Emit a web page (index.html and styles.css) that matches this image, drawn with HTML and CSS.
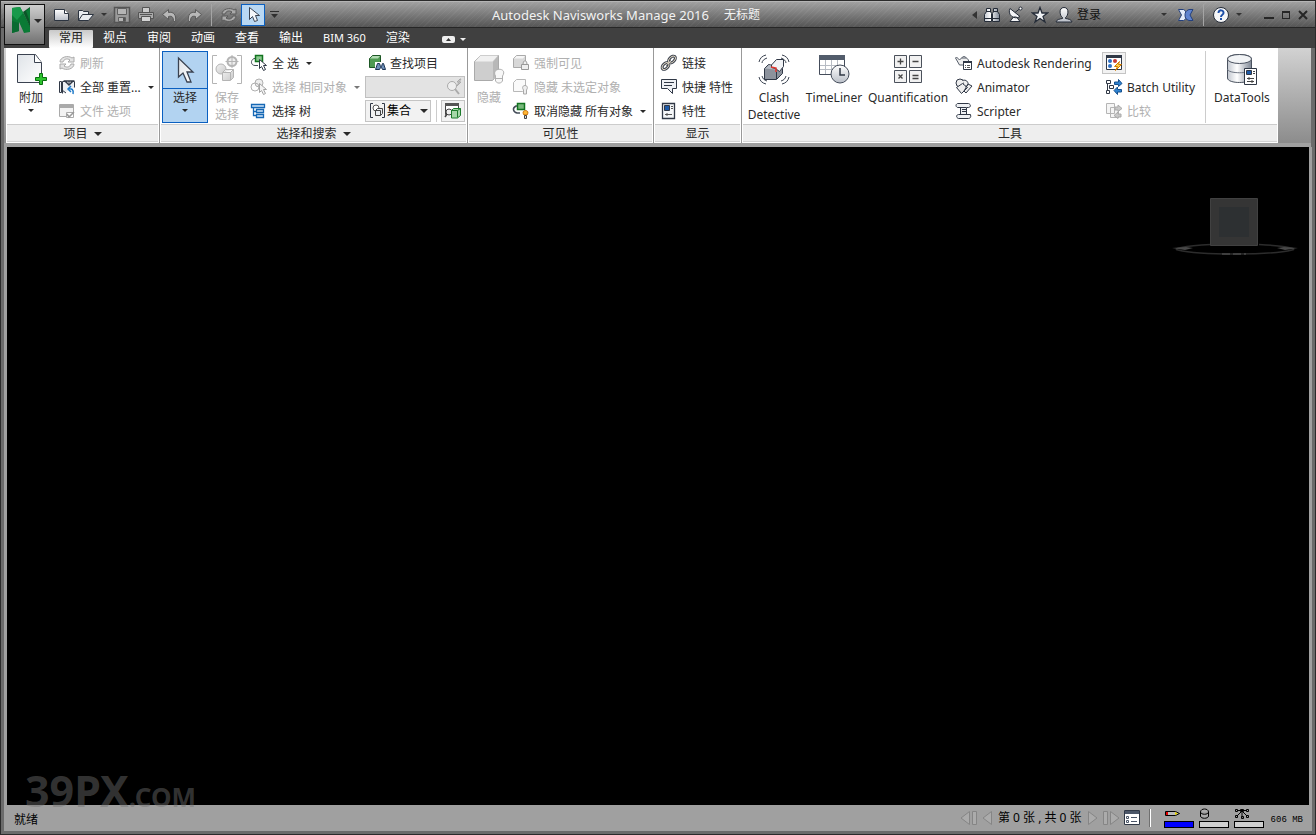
FILE: index.html
```html
<!DOCTYPE html>
<html lang="zh-CN">
<head>
<meta charset="utf-8">
<title>Autodesk Navisworks Manage 2016</title>
<link rel="stylesheet" href="styles.css">
</head>
<body>
<svg class="defs" aria-hidden="true">
  <defs>
    <linearGradient id="page" x1="0" y1="0" x2="1" y2="1"><stop offset="0" stop-color="#dfe3e8"/><stop offset="1" stop-color="#ffffff"/></linearGradient>
    <linearGradient id="metal" x1="0" y1="0" x2="0" y2="1"><stop offset="0" stop-color="#ffffff"/><stop offset="1" stop-color="#b9bec7"/></linearGradient>
    <linearGradient id="tube" x1="0" y1="0" x2="1" y2="0"><stop offset="0" stop-color="#c3c8d0"/><stop offset=".4" stop-color="#ffffff"/><stop offset="1" stop-color="#7d8694"/></linearGradient>
    <linearGradient id="pale" x1="0" y1="0" x2="1" y2="1"><stop offset="0" stop-color="#f2f2f2"/><stop offset="1" stop-color="#c9c9c9"/></linearGradient>
  </defs>
</svg>
<div class="window">
  <header class="title-bar">
    <button class="app-button" aria-label="应用程序菜单">
      <svg width="20" height="27" viewBox="0 0 20 27"><path fill="#0a7a35" d="M0 1l8-1 4 7 6 12v6l-6 1-5-11v9l-7 2z"/><path fill="#0b5528" d="M11 5l7-5v20z"/><path fill="#17994a" d="M0 1l8-1 3 6-6 7-5-5z"/><path fill="#096a30" d="M0 14l7 2v8l-7 2z"/><path fill="#0a7a35" d="M14 4l4-3v14z"/></svg>
      <span class="caret caret-wide"></span>
    </button>
    <div class="quick-access">
      <button class="tool" aria-label="新建"><svg width="18" height="18" viewBox="0 0 18 18"><path fill="url(#metal)" stroke="#2c3440" d="M1.500 3.500h10l4 4v7h-14z"/><path fill="#fff" stroke="#2c3440" d="M11.500 3.500v4h4"/></svg></button>
      <button class="tool" aria-label="打开"><svg width="18" height="18" viewBox="0 0 18 18"><path fill="#e9ecf0" stroke="#2c3440" d="M1.500 14.500v-10h4l1 1h5v3M1.500 14.500l4-6h11l-5 6z"/></svg></button>
      <span class="caret caret-small"></span>
      <button class="tool" aria-label="保存"><svg width="18" height="18" viewBox="0 0 18 18"><path fill="#9a9a9a" stroke="#555" stroke-width="1.500" d="M1.500 1.500h15v15h-15z"/><path fill="#b5b5b5" stroke="#606060" d="M4.500 2.500h9v6h-9zM5.500 11.500h7v4h-7z"/><path fill="#555" d="M10 12h2v3h-2z"/></svg></button>
      <button class="tool" aria-label="打印"><svg width="18" height="18" viewBox="0 0 18 18"><path fill="#ccc" stroke="#555" d="M5.500 6.500v-5h7v5"/><path fill="#aaa" stroke="#555" d="M1.500 6.500h15v6h-15z"/><path fill="#d4d4d4" stroke="#555" d="M4.500 10.500h9v5h-9z"/><path stroke="#555" d="M3 8.500h12"/></svg></button>
      <button class="tool" aria-label="撤消"><svg width="18" height="18" viewBox="0 0 18 18"><path fill="#b8b8b8" stroke="#5a5a5a" d="M1.500 8.500l6-5v3c5-1 8 2 7 9h-2c0-4-1-6-5-5v3z"/></svg></button>
      <button class="tool" aria-label="恢复"><svg width="18" height="18" viewBox="0 0 18 18"><path fill="#b8b8b8" stroke="#5a5a5a" d="M16.500 8.500l-6-5v3c-5-1-8 2-7 9h2c0-4 1-6 5-5v3z"/></svg></button>
      <span class="bar-divider"></span>
      <button class="tool" aria-label="刷新"><svg width="18" height="18" viewBox="0 0 18 18"><path fill="#aaa" stroke="#5a5a5a" d="M2 8c0-5 8-7 12-4l2-1v5h-6l2-2c-3-2-6-1-7 2zM16 10c0 5-8 7-12 4l-2 1v-5h6l-2 2c3 2 6 1 7-2z"/></svg></button>
      <button class="tool tool-active" aria-label="选择"><svg width="18" height="18" viewBox="0 0 18 18"><path fill="#f5f7fa" stroke="#3a4352" d="M5.500 1.500v12l3-3 2 5 3-1-2-5h4z"/></svg></button>
      <button class="tool tool-narrow" aria-label="自定义"><svg width="9" height="8" viewBox="0 0 9 8"><path fill="#2f2f2f" d="M0 0h9v1H0zM1 3h7L4.500 7z"/></svg></button>
    </div>
    <h1 class="title"><span>Autodesk Navisworks Manage 2016</span><span class="document">无标题</span></h1>
    <div class="info-center">
      <svg width="5" height="8" viewBox="0 0 5 8"><path fill="#333" d="M5 0v8L0 4z"/></svg>
      <button class="tool" aria-label="搜索"><svg width="18" height="18" viewBox="0 0 18 18"><path fill="url(#tube)" stroke="#252c38" d="M3.500 2.500h4v3l1 2v8h-7v-7l2-3zM10.500 2.500h4v3l2 3v7h-7v-8l1-2z"/><path stroke="#252c38" d="M3 5.500h5M10 5.500h5M1 12.500h7M10 12.500h7"/></svg></button>
      <button class="tool" aria-label="通讯中心"><svg width="18" height="18" viewBox="0 0 18 18"><path fill="#f4f5f7" stroke="#252c38" d="M6.500 11l-3.500 4.500h10L9.500 11zM3 2.500c-3 6 4 12 10 8zM8 6.500l5-4"/><circle cx="13.500" cy="2.500" r="1.500" fill="#fff" stroke="#252c38"/></svg></button>
      <button class="tool" aria-label="收藏夹"><svg width="18" height="18" viewBox="0 0 18 18"><path fill="#f0f2f5" stroke="#252c38" stroke-width="1.300" d="M9 1.500l2 5.500h5.500L12 10.500l2 5.500-5-3.500L4 16l2-5.500L1.500 7H7z"/></svg></button>
      <button class="login"><svg width="18" height="18" viewBox="0 0 18 18"><path fill="url(#metal)" stroke="#252c38" d="M9 1.500c-6 0-4 9-1.500 10v1c-3 .5-6 1-6.500 3.500h16c-.5-2.500-3.500-3-6.500-3.500v-1c2.500-1 4.500-10-1.500-10z"/></svg><span>登录</span><i class="caret caret-small"></i></button>
      <button class="tool" aria-label="Exchange"><svg width="18" height="18" viewBox="0 0 18 18"><path fill="#e3ebfa" stroke="#24407c" d="M1.500 3.500h5c2 1 3 3 3 5.500 0 3-1 4.500-3 5.500h-5l3-5.500z"/><path fill="#5f83cf" stroke="#24407c" d="M16 3.500h-4c-3 1-4 3-4 5.500 0 3 1 4.500 4 5.500h4L13 9z"/></svg></button>
      <span class="bar-divider"></span>
      <button class="tool help" aria-label="帮助"><svg width="18" height="18" viewBox="0 0 18 18"><circle cx="9" cy="9" r="7.500" fill="#f5f6f8" stroke="#252c38"/><path fill="none" stroke="#1d4fa8" stroke-width="2" d="M6.500 7c0-4 5.500-3 5 0 0 2-2.500 1.500-2.500 4M9 12v2"/></svg></button>
      <span class="caret caret-small"></span>
      <div class="window-controls">
        <button aria-label="最小化"><svg width="10" height="10" viewBox="0 0 10 10"><path fill="#262626" d="M0 7h10v2H0z"/></svg></button>
        <button aria-label="最大化"><svg width="10" height="10" viewBox="0 0 10 10"><path fill="#262626" fill-rule="evenodd" d="M1 1h8v8H1zM2 3v5h6V3z"/></svg></button>
        <button aria-label="关闭"><svg width="10" height="10" viewBox="0 0 10 10"><path stroke="#262626" stroke-width="2" d="M1 1l8 8M9 1L1 9"/></svg></button>
      </div>
    </div>
  </header>

  <nav class="tabs">
    <button class="tab tab-current">常用</button>
    <button class="tab">视点</button>
    <button class="tab">审阅</button>
    <button class="tab">动画</button>
    <button class="tab">查看</button>
    <button class="tab">输出</button>
    <button class="tab tab-latin">BIM 360</button>
    <button class="tab">渲染</button>
    <button class="ribbon-toggle" aria-label="最小化功能区"><svg width="13" height="7" viewBox="0 0 13 7"><rect width="13" height="7" rx="2" fill="#eee"/><path fill="#333" d="M4 5h5L6.500 2z"/></svg><i class="caret caret-light"></i></button>
  </nav>

  <div class="ribbon">
    <section class="panel panel-project">
      <div class="panel-body">
        <button class="large"><svg width="32" height="32" viewBox="0 0 32 32"><path fill="url(#page)" stroke="#3a4250" d="M2.500.500h18l6 8v20h-24z"/><path fill="#fff" stroke="#3a4250" d="M19.500.500v8h7"/><path fill="#2fc32f" stroke="#08700f" d="M24.500 19.500h3v4h4v3h-4v4h-3v-4h-4v-3h4z"/></svg><span>附加</span><i class="caret caret-small"></i></button>
        <div class="stack">
          <button class="small" disabled><svg width="18" height="18" viewBox="0 0 18 18"><path fill="#e4e4e4" stroke="#aaa" d="M2 8c0-5 8-7 12-4l2-1v5h-6l2-2c-3-2-6-1-7 2zM16 10c0 5-8 7-12 4l-2 1v-5h6l-2 2c3 2 6 1 7-2z"/></svg><span>刷新</span></button>
          <button class="small"><svg width="18" height="18" viewBox="0 0 18 18"><path fill="#eceff3" stroke="#303846" d="M1.500 3.500h2v11h-2zM4.500 15.500v-12h12v6"/><path fill="#fff" stroke="#303846" stroke-width="1.500" d="M7 3h8l-4 4z"/><path stroke="#303846" d="M11 3v4M4 12l4 3"/><path fill="none" stroke="#1b78c8" stroke-width="1.500" d="M13 8l-3 3 3 3M10 11c4-1 6 1 5 5"/></svg><span>全部 重置...</span><i class="caret caret-small"></i></button>
          <button class="small" disabled><svg width="18" height="18" viewBox="0 0 18 18"><path fill="#f3f3f3" stroke="#aaa" d="M1.500 2.500h14v12h-14z"/><path fill="#aaa" d="M2 3h13v3H2z"/><path fill="#fff" stroke="#aaa" d="M8.500 10.500h7v5h-7z"/><path fill="none" stroke="#999" stroke-width="1.500" d="M9 12l2 3 5-5"/></svg><span>文件 选项</span></button>
        </div>
      </div>
      <button class="panel-label">项目<i class="caret caret-wide"></i></button>
    </section>

    <section class="panel panel-select">
      <div class="panel-body">
        <button class="large large-active"><span class="active-icon"><svg width="32" height="32" viewBox="0 0 32 32"><path fill="url(#page)" stroke="#3a4250" stroke-width="1.300" d="M9.500 4v19l4.500-4 4 9h4l-4-10h6z"/></svg></span><span>选择</span><i class="caret caret-small"></i></button>
        <button class="large" disabled><svg width="32" height="32" viewBox="0 0 32 32"><path fill="none" stroke="#b4b4b4" d="M6 1.500H1.500v28H6M26 1.500h4.500v28H26"/><circle cx="10" cy="15" r="5" fill="url(#pale)" stroke="#b4b4b4"/><path fill="url(#pale)" stroke="#b4b4b4" d="M11.500 18.500l3-3h8v8l-3 3h-8zM11.500 18.500h8l3-3M19.500 18v8"/><circle cx="21" cy="7.500" r="4.500" fill="#eee" stroke="#b4b4b4" stroke-width="2"/><path stroke="#b4b4b4" d="M21 1v13M14.500 7.500h13"/></svg><span>保存<br>选择</span></button>
        <div class="stack">
          <button class="small"><svg width="18" height="18" viewBox="0 0 18 18"><path fill="none" stroke="#444c58" d="M7 4.500H4c-4 2-3 7 1 7h3"/><path fill="#8bc98f" stroke="#11731f" stroke-width="1.500" d="M5.500 1.500h7v6h-7z"/><path fill="#fff" stroke="#303846" d="M9.500 5.500v9l2-2 2 4 2-1-2-4h3z"/></svg><span>全 选</span><i class="caret caret-small"></i></button>
          <button class="small" disabled><svg width="18" height="18" viewBox="0 0 18 18"><circle cx="9" cy="5" r="4" fill="#eee" stroke="#b0b0b0"/><circle cx="5" cy="9" r="4" fill="none" stroke="#b0b0b0"/><path fill="#f4f4f4" stroke="#a4a4a4" d="M9.500 5.500v9l2-2 2 4 2-1-2-4h3z"/></svg><span>选择 相同对象</span><i class="caret caret-small"></i></button>
          <button class="small"><svg width="18" height="18" viewBox="0 0 18 18"><path fill="#d5e7fa" stroke="#1668b5" stroke-width="1.300" d="M1.500 2.500h13v3h-13zM6.500 7.500h7v3h-7zM6.500 12.500h7v3h-7z"/><path fill="none" stroke="#1668b5" stroke-width="1.300" d="M3.500 5.500v8h3M3.500 9.500h3"/></svg><span>选择 树</span></button>
        </div>
        <div class="search-stack">
          <button class="small find"><svg width="18" height="18" viewBox="0 0 18 18"><path fill="#4f9a52" stroke="#1d5725" d="M1.500 4.500l3-3h8v9l-3 3h-8z"/><path fill="#b1dab2" d="M2 4.500L4.500 2H12l-2 2.500z"/><path fill="#fff" d="M7 8h11v9H7z"/><path fill="#6f8fb8" stroke="#1d3555" d="M9.500 9.500h2l1 3h1l1-3h1l2 6h-3l-1-2h-1l-1 2h-4z"/></svg><span>查找项目</span></button>
          <div class="quick-find"><input type="text" aria-label="快速查找" disabled><svg width="18" height="18" viewBox="0 0 18 18"><path stroke="#aaa" stroke-width="2" d="M10 11l4 5"/><circle cx="7" cy="8" r="4.500" fill="#eee" stroke="#aaa"/><path fill="#ddd" stroke="#aaa" d="M15 1l-3 3h2l-2 4 4-4h-2l2-3z"/></svg></div>
          <div class="sets-row">
            <label class="sets"><svg width="18" height="18" viewBox="0 0 18 18"><path fill="none" stroke="#303846" d="M4 1.500H1.500v14H4M13 1.500h2.500v14H13"/><circle cx="7" cy="6" r="3" fill="#fff" stroke="#555"/><path fill="#eceff3" stroke="#444" d="M6.500 8.500l2-2h5v5l-2 2h-5zM6.500 8.500h5v5"/></svg><select aria-label="集合"><option>集合</option></select><i class="caret caret-wide"></i></label>
            <span class="sets-divider"></span>
            <button class="boxed" aria-label="选择检验器"><svg width="18" height="18" viewBox="0 0 18 18"><path fill="#fff" stroke="#444" d="M1.500 1.500h13v11h-13z"/><path fill="#555" d="M1 1h14v3H1z"/><circle cx="5" cy="10" r="3" fill="#eee" stroke="#444"/><path stroke="#444" stroke-width="1.500" d="M3 12l-2 3"/><path fill="#a6d7a8" stroke="#1c7a2b" d="M7.500 8.500l2-2h7v7l-3 2.500h-6zM7.500 8.500h6v7M13.500 8.500l3-2"/></svg></button>
          </div>
        </div>
      </div>
      <button class="panel-label">选择和搜索<i class="caret caret-wide"></i></button>
    </section>

    <section class="panel panel-visibility">
      <div class="panel-body">
        <button class="large" disabled><svg width="32" height="32" viewBox="0 0 32 32"><path fill="#cecece" stroke="#aaa" d="M1.500 7.500l6-6h18v18l-6 7h-18z"/><path fill="#f0f0f0" d="M2 7.500l5.500-6h17.500l-5.500 6z"/><path fill="#b8b8b8" d="M20 8l5-6v17l-5 6z"/><path fill="#f7f7f7" stroke="#b0b0b0" d="M22.500 22c-5-9 13-9 7 0v5l-2 2h-3l-2-2zM23 24.500h6"/></svg><span>隐藏</span></button>
        <div class="stack">
          <button class="small" disabled><svg width="18" height="18" viewBox="0 0 18 18"><path fill="#d8d8d8" stroke="#aaa" d="M1.500 4.500l3-3h9v9l-3 3h-9z"/><path fill="#f5f5f5" d="M2 4.500L4.500 2H13l-2 2.500z"/><path fill="#eee" stroke="#999" d="M9.500 10.500h7v5h-7zM11 10.500c0-5 4-5 4 0"/></svg><span>强制可见</span></button>
          <button class="small" disabled><svg width="18" height="18" viewBox="0 0 18 18"><path fill="#fafafa" stroke="#b8b8b8" d="M1.500 4.500l3-3h9v9l-3 3h-9z"/><path fill="#eee" stroke="#aaa" d="M11.500 12c-4-6 7-6 3 0v4h-3z"/></svg><span>隐藏 未选定对象</span></button>
          <button class="small"><svg width="18" height="18" viewBox="0 0 18 18"><path fill="none" stroke="#444c58" stroke-width="1.500" d="M6 4H4C0 6 1 10 5 11h3"/><path fill="#79b87c" stroke="#11731f" stroke-width="1.500" d="M5.500 1.500h7v6h-7z"/><path fill="#ffb733" stroke="#c66c00" d="M12 13c-4-6 7-6 3 0z"/><path fill="#d8dce2" stroke="#444" d="M12.500 13.500h2v3h-2z"/></svg><span>取消隐藏 所有对象</span><i class="caret caret-small"></i></button>
        </div>
      </div>
      <div class="panel-label">可见性</div>
    </section>

    <section class="panel panel-display">
      <div class="panel-body">
        <div class="stack">
          <button class="small"><svg width="18" height="18" viewBox="0 0 18 18"><g fill="none" stroke="#353d4a" stroke-width="3"><ellipse cx="12" cy="5.500" rx="4" ry="2.500" transform="rotate(-45 12 5.500)"/><ellipse cx="5.500" cy="12" rx="4" ry="2.500" transform="rotate(-45 5.500 12)"/><path d="M6 11l5-4"/></g><g fill="none" stroke="#e0d6c4"><ellipse cx="12" cy="5.500" rx="4" ry="2.500" transform="rotate(-45 12 5.500)"/><ellipse cx="5.500" cy="12" rx="4" ry="2.500" transform="rotate(-45 5.500 12)"/><path d="M6 11l5-4"/></g></svg><span>链接</span></button>
          <button class="small"><svg width="18" height="18" viewBox="0 0 18 18"><path fill="#eef0f4" stroke="#303846" d="M1.500 1.500h15v9h-4v5l-5-5h-6z"/><path stroke="#303846" d="M4 4.500h10M4 7.500h8"/></svg><span>快捷 特性</span></button>
          <button class="small"><svg width="18" height="18" viewBox="0 0 18 18"><path fill="#f5f7f9" stroke="#303846" stroke-width="1.300" d="M2.500 1.500h12v15h-12z"/><path fill="#1d5aa8" stroke="#303846" d="M4.500 3.500h5v5h-5z"/><path stroke="#555" d="M11 4.500h2M11 6.500h2M5 12.500h7M7 11v3"/></svg><span>特性</span></button>
        </div>
      </div>
      <div class="panel-label">显示</div>
    </section>

    <section class="panel panel-tools">
      <div class="panel-body">
        <button class="large"><svg width="32" height="32" viewBox="0 0 32 32"><path fill="none" stroke="#3a4250" d="M1 8C2 4 4 2 8 1M4 9c0-2 2-4 5-5M31 8c-1-4-3-6-7-7M28 9c0-2-2-4-5-5M1 23c1 4 3 6 7 7M4 22c1 3 2 4 5 5M31 23c-1 4-3 6-7 7M28 22c-1 3-2 4-5 5"/><path fill="#8c929c" stroke="#303846" d="M6.500 14.500l4-4 9 2 5 2v5l-6 6h-12z"/><path fill="#b5bac3" d="M7 14.500l4-3.500 8 1.500-2 3z"/><path fill="#f1f3f6" stroke="#303846" d="M13.500 11l5-5.500h7v7l-4 5-4-3-4-1z"/><path fill="none" stroke="#e3342c" stroke-width="1.500" d="M13 13l5 1v4"/><path stroke="#303846" d="M18.500 18v7"/></svg><span>Clash<br>Detective</span></button>
        <button class="large"><svg width="32" height="32" viewBox="0 0 32 32"><path fill="#fff" stroke="#444c5a" d="M1.500 1.500h25v19h-25z"/><path fill="#525c6b" d="M1 1h26v5H1z"/><path stroke="#b6bbc3" d="M2 11.500h24M2 15.500h24M7.500 6v14M13.500 6v14M19.500 6v14"/><circle cx="22" cy="20" r="9" fill="url(#metal)" stroke="#444c5a"/><path fill="none" stroke="#303846" stroke-width="1.500" d="M22 14v7h5"/></svg><span>TimeLiner</span></button>
        <button class="large"><svg width="32" height="32" viewBox="0 0 32 32"><path fill="#f1f1f1" stroke="#4b515b" d="M2.500 1.500h12v12h-12zM17.500 1.500h12v12h-12zM2.500 16.500h12v12h-12zM17.500 16.500h12v12h-12z"/><path stroke="#444" stroke-width="1.300" fill="none" d="M5.500 7.500h6M8.500 4.500v6M20.500 7.500h6M6.500 20.500l4 4M10.500 20.500l-4 4M20.500 21.500h6M20.500 24.500h6"/></svg><span>Quantification</span></button>
        <div class="stack">
          <button class="small"><svg width="18" height="18" viewBox="0 0 18 18"><path fill="#eee" stroke="#555d69" d="M4.500 6l-3-3-1 1 4 7h9v-5l-2-2h-5zM7 4c0-2 4-2 4 0"/><path fill="#fff" stroke="#303846" d="M8.500 7.500h8v8h-8z"/><path fill="#303846" d="M8 7h9v2H8z"/><path stroke="#555" d="M10 11.500h1M12 11.500h3M10 13.500h1M12 13.500h3"/></svg><span>Autodesk Rendering</span></button>
          <button class="small"><svg width="18" height="18" viewBox="0 0 18 18"><circle cx="5" cy="5" r="4" fill="#eee" stroke="#303846"/><path fill="#eee" stroke="#303846" d="M7.500 2.500c5-2 8 5 3 6M9 13l4-7 4 2-6 7zM1.500 9.500l5 6 6-6-5-4z"/></svg><span>Animator</span></button>
          <button class="small"><svg width="18" height="18" viewBox="0 0 18 18"><path fill="#eef0f3" stroke="#303846" d="M2.500 1.500h11c3 1 2 4 0 4h-2v7h4c1 3-1 4-2 4h-10c-3-1-2-4 0-4h2v-7h-3c-2-1-2-3 0-4zM5 5.500h6M5 12.500h8M7 7.500h4M7 9.500h4"/></svg><span>Scripter</span></button>
        </div>
        <div class="stack stack-right">
          <button class="boxed" aria-label="外观配置器"><svg width="18" height="18" viewBox="0 0 18 18"><path fill="#fff" stroke="#303846" d="M1.500 1.500h15v14h-15z"/><path fill="#303846" d="M1 1h16v3H1z"/><circle cx="5" cy="7" r="2" fill="#2d70c4"/><circle cx="10" cy="7" r="2" fill="#c73a34"/><circle cx="5" cy="12" r="2" fill="#2d70c4"/><path fill="#ffd34a" stroke="#d17b00" d="M14.500 7.500l-5 5h3l-2 4 6-6h-3z"/></svg></button>
          <button class="small"><svg width="18" height="18" viewBox="0 0 18 18"><path fill="#fff" stroke="#303846" d="M1.500 2.500h4v3h-4zM4.500 7.500h4v3h-4zM1.500 12.500h3v3h-3z"/><path fill="none" stroke="#303846" d="M2.500 5.500v7"/><path fill="#2e82d1" stroke="#15508e" d="M9.500 4h4V1.500l3.500 4-3.500 3V6.500h-4zM16.500 11.500h-4V9L9 12.500l3.500 4V14h4z"/></svg><span>Batch Utility</span></button>
          <button class="small" disabled><svg width="18" height="18" viewBox="0 0 18 18"><path fill="#f5f5f5" stroke="#b5b5b5" d="M1.500 1.500h8v10h-8zM5.500 5.500h8v10h-8z"/><path fill="#c8c8c8" stroke="#aaa" d="M10 5h3V3l4 3.500-4 3V8h-3zM16 12h-3v-2l-4 3.500 4 3V15h3z"/></svg><span>比较</span></button>
        </div>
        <button class="large datatools"><svg width="32" height="32" viewBox="0 0 32 32"><path fill="url(#tube)" stroke="#4a525f" d="M1.500 5c0-6 24-6 24 0v19c0 6-24 6-24 0z"/><ellipse cx="13.500" cy="5" rx="12" ry="4.500" fill="#f2f4f6" stroke="#4a525f"/><path fill="none" stroke="#6d7582" d="M1.500 15c0 5 24 5 24 0"/><path fill="#fff" stroke="#303846" d="M18.500 14.500h12v16h-12z"/><path fill="#1d5aa8" stroke="#303846" d="M20.500 16.500h5v4h-5z"/><path stroke="#444" d="M27 17.500h2M27 19.500h2M21 24.500h7M21 27.500h7M23 23v3M26 26v3"/></svg><span>DataTools</span></button>
      </div>
      <div class="panel-label">工具</div>
    </section>
  </div>

  <main class="viewport">
    <svg class="view-cube" width="126" height="58" viewBox="0 0 126 58"><path fill="none" stroke="#2c2c2c" stroke-width="1.500" d="M39 46.500C10 48 0 51 6 52c12 3 35 4 57 4s45-1 57-4c6-1-4-4-33-5.500"/><path fill="#484848" d="M0 50l14-1 7 1-8 2zM126 50l-14-1-7 1 8 2z"/><path stroke="#5d5d5d" stroke-dasharray="8 3" d="M50 56h24"/><path fill="#353535" stroke="#414141" d="M38.500.500h47v47h-47z"/><path fill="#2d3032" d="M47 9h30v30H47z"/></svg>
  </main>

  <footer class="status-bar">
    <span class="status-text">就绪</span>
    <div class="sheets">
      <button aria-label="第一张"><svg width="18" height="16" viewBox="0 0 18 16"><path fill="#ababab" stroke="#858585" d="M9.500 1.500v13L1 8zM12.500 1.500h4v13h-4z"/></svg></button>
      <button aria-label="上一张"><svg width="10" height="16" viewBox="0 0 10 16"><path fill="#ababab" stroke="#858585" d="M9.500 1.500v13L1 8z"/></svg></button>
      <span class="sheet-count">第 0 张 , 共 0 张</span>
      <button aria-label="下一张"><svg width="10" height="16" viewBox="0 0 10 16"><path fill="#ababab" stroke="#858585" d="M.500 1.500v13L9 8z"/></svg></button>
      <button aria-label="最后一张"><svg width="18" height="16" viewBox="0 0 18 16"><path fill="#ababab" stroke="#858585" d="M1.500 1.500h4v13h-4zM8.500 1.500v13L17 8z"/></svg></button>
      <button aria-label="图纸浏览器"><svg width="16" height="16" viewBox="0 0 16 16"><path fill="#fff" stroke="#303846" d="M.500.500h15v14H.500z"/><path fill="#4b5668" d="M1 1h14v3H1z"/><path fill="none" stroke="#4b5668" d="M2.500 6.500h2v2h-2zM2.500 10.500h2v2h-2zM7 7.500h6M7 11.500h6"/></svg></button>
    </div>
    <span class="status-divider"></span>
    <div class="meter"><svg width="30" height="13" viewBox="0 0 30 13"><path fill="#bbb" stroke="#000" d="M1.500 3.500h10l4 2-4 2h-10z"/><path fill="#e00000" d="M2 4h2v3H2z"/><path fill="#e8d500" d="M11 4l3 1.500-3 1.500z"/></svg><span class="gauge gauge-full"></span></div>
    <div class="meter"><svg width="30" height="13" viewBox="0 0 30 13"><path fill="#aaa" stroke="#000" d="M1.500 4c0-4 8-4 8 0v4c0 3-8 3-8 0zM1.500 4c0 3 8 3 8 0"/></svg><span class="gauge"></span></div>
    <div class="meter"><svg width="30" height="13" viewBox="0 0 30 13"><path fill="none" stroke="#000" d="M1.500 1.500h2v2h-2zM6.500 1.500h3v2h-3zM12.500 1.500h2v2h-2zM3.500 2.500h9M8 3.500v6M7 4L3 8M9 4l4 4M1.500 7.500h2v2h-2zM12.500 7.500h2v2h-2zM7.500 8.500h2v2h-2z"/></svg><span class="gauge"></span></div>
    <span class="memory">606 MB</span>
  </footer>
  <div class="watermark">39PX<span>.COM</span></div>
</div>
</body>
</html>
```

FILE: styles.css
```css
* { box-sizing: border-box; }
body {
  margin: 0;
  background: #2b2b2b;
  color: #2a2a2a;
  font: 12px/16px "Noto Sans", "Noto Sans CJK SC", sans-serif;
}
button, select, input { font: inherit; color: inherit; }
button { margin: 0; padding: 0; border: 0; background: none; }
svg { display: block; flex: none; }
.defs { position: absolute; width: 0; height: 0; }

.window {
  position: relative;
  display: flex;
  flex-direction: column;
  min-height: 100vh;
  border: 1px solid #2b2b2b;
  background: #6b6b6b;
}

.caret {
  flex: none;
  width: 0;
  height: 0;
  border: 3px solid transparent;
  border-top-color: currentColor;
  border-bottom: 0;
}
.caret-small { border-width: 3px 3px 0; }
.caret-wide { border-width: 4px 4px 0; }
.caret-light { border-width: 3px 3px 0; color: #eee; }

/* Title bar */
.title-bar {
  display: flex;
  align-items: center;
  height: 27px;
  padding: 0 7px 0 52px;
  border-top: 1px solid #b5b5b5;
  border-bottom: 1px solid #262626;
  background:
    repeating-linear-gradient(135deg, rgba(255, 255, 255, .04) 0 1px, transparent 1px 4px),
    linear-gradient(#a0a0a0, #555);
}
.app-button {
  position: absolute;
  left: 3px;
  top: 3px;
  z-index: 1;
  display: flex;
  align-items: center;
  gap: 2px;
  width: 41px;
  height: 41px;
  padding: 0 0 8px 7px;
  border: 1px solid #111;
  background: linear-gradient(#cfcfcf, #727272);
}
.quick-access, .info-center, .window-controls { display: flex; align-items: center; }
.quick-access { gap: 6px; }
.quick-access .caret { margin: 0; color: #333; }
.tool { display: flex; align-items: center; justify-content: center; width: 18px; height: 22px; }
.tool-active { width: 24px; margin: 0 -3px; border: 1px solid #0a5fc0; background: #b9d8f3; }
.tool-narrow { width: 12px; }
.bar-divider { width: 1px; height: 22px; margin: 0 2px; background: #a4a4a4; }
.title {
  flex: 1;
  display: flex;
  justify-content: center;
  gap: 15px;
  margin: 0;
  color: #f2f2f2;
  font-size: 13px;
  font-weight: 400;
  white-space: nowrap;
}
.document { font-size: 12px; }
.info-center { gap: 6px; }
.info-center > .caret { margin-right: 16px; color: #333; }
.login { display: flex; align-items: center; gap: 4px; width: 112px; margin-right: 4px; color: #111; }
.login .caret { margin-left: auto; color: #333; }
.window-controls { gap: 7px; }

/* Ribbon tabs */
.tabs {
  display: flex;
  height: 20px;
  margin: 0 0 0 3px;
  padding: 2px 0 0 45px;
  background: #404040;
  color: #fff;
}
.tab { padding: 0 10px 2px; white-space: nowrap; }
.tab-latin { font-size: 11px; }
.tab-current { border-radius: 1px; background: linear-gradient(#c9c9c9, #fff); color: #222; }
.ribbon-toggle { display: flex; align-items: center; gap: 5px; margin-left: 22px; }

/* Ribbon */
.ribbon {
  display: flex;
  margin: 0 4px 0 3px;
  padding-left: 2px;
  border-bottom: 4px solid #a0a0a0;
  background: linear-gradient(#d2d2d2, #8c8c8c);
}
.panel { display: flex; flex-direction: column; padding-bottom: 1px; border-right: 1px solid #999; background: #fff; }
.panel-project { width: 154px; }
.panel-select { width: 308px; }
.panel-visibility { width: 186px; }
.panel-display { width: 88px; }
.panel-tools { width: 536px; border-right: 0; }
.panel-body { display: flex; height: 76px; padding: 3px 2px 1px; }
.panel-label {
  display: flex;
  align-items: center;
  justify-content: center;
  gap: 6px;
  height: 18px;
  margin: 0 1px;
  padding-top: 2px;
  border-top: 1px solid #ccc;
  border-bottom: 1px solid #d5d5d5;
  background: #eee;
}
.large {
  display: flex;
  flex: none;
  flex-direction: column;
  align-items: center;
  width: 46px;
  padding-top: 3px;
  line-height: 17px;
}
.large > svg { margin-bottom: 3px; }
.large > .caret { margin-top: 3px; }
.large-active { padding: 0; border: 1px solid #0a5fc0; background: #b2d3f1; }
.active-icon { width: 100%; padding: 2px 0 2px 6px; border-bottom: 1px solid #0a5fc0; }
.stack { display: grid; flex: none; grid-template-rows: repeat(3, 24px); justify-items: start; align-items: center; }
.small { display: flex; align-items: center; gap: 4px; white-space: nowrap; }
.small span { padding-top: 2px; }
.small .caret { margin-left: 3px; }
.large:disabled, .small:disabled { color: #b0b0b0; }
.small:disabled .caret { color: #777; }
.boxed {
  display: flex;
  align-items: center;
  justify-content: center;
  width: 24px;
  height: 22px;
  border: 1px solid #c4c4c4;
  background: #f2f2f2;
}

.panel-project .stack { margin-left: 4px; }
.panel-select .stack { width: 115px; margin-left: 4px; }
.panel-select .large:disabled { width: 38px; }
.panel-visibility .large { width: 38px; margin-right: 4px; }
.panel-display .panel-body { padding-left: 6px; }

.search-stack {
  display: grid;
  grid-template: repeat(3, 24px) / minmax(0, 1fr);
  flex: 1;
  align-items: center;
}
.find { margin-left: 3px; }
.quick-find {
  display: flex;
  align-items: center;
  height: 22px;
  padding-right: 1px;
  border: 1px solid #c0c0c0;
  background: #e3e3e3;
}
.quick-find input { flex: 1; min-width: 0; padding: 0; border: 0; background: none; }
.sets-row { display: flex; align-items: center; justify-content: space-between; }
.sets {
  display: flex;
  align-items: center;
  width: 66px;
  height: 22px;
  padding: 0 2px 0 3px;
  border: 1px solid #c4c4c4;
  background: #f2f2f2;
}
.sets select { flex: 1; min-width: 0; padding: 0; border: 0; appearance: none; background: none; color: #000; }
.sets-divider { width: 1px; height: 22px; background: #ccc; }

.panel-tools .large:nth-child(1) { width: 60px; }
.panel-tools .large:nth-child(2) { width: 60px; }
.panel-tools .large:nth-child(3) { width: 88px; }
.panel-tools .stack { width: 147px; margin-left: 3px; }
.panel-tools .stack-right { width: 103px; margin-left: 0; }
.stack-right .small { margin-left: 3px; }
.panel-tools .datatools { flex: 1; margin-right: -2px; border-left: 1px solid #ccc; }

/* Model view */
.viewport {
  display: flex;
  flex: 1;
  justify-content: flex-end;
  margin: 0 3px;
  padding: 51px 11px 0 0;
  border: solid #a0a0a0;
  border-width: 0 3px;
  background: #000;
}

/* Status bar */
.status-bar {
  display: flex;
  align-items: center;
  height: 26px;
  margin: 0 3px 3px;
  padding: 0 9px 0 10px;
  background: #a0a0a0;
  color: #000;
}
.status-text { padding-top: 4px; }
.sheets { display: flex; align-items: center; gap: 4px; margin-left: auto; }
.sheet-count { padding: 0 2px; }
.status-divider { width: 2px; height: 18px; margin: 0 13px 0 9px; border-left: 1px solid #707070; background: #fff; }
.meter { display: flex; flex-direction: column; margin-right: 5px; }
.gauge { height: 7px; border: 1px solid #000; background: #d0d0d0; }
.gauge-full { background: #0000ff; }
.memory { margin-left: 2px; padding-top: 4px; font: 9px/16px "Liberation Mono", monospace; }

.watermark {
  position: absolute;
  left: 24px;
  bottom: 13px;
  color: rgba(112, 112, 112, .45);
  font: bold 43px/48px "Noto Sans", sans-serif;
  pointer-events: none;
}
.watermark span { font-size: 26px; }
```
